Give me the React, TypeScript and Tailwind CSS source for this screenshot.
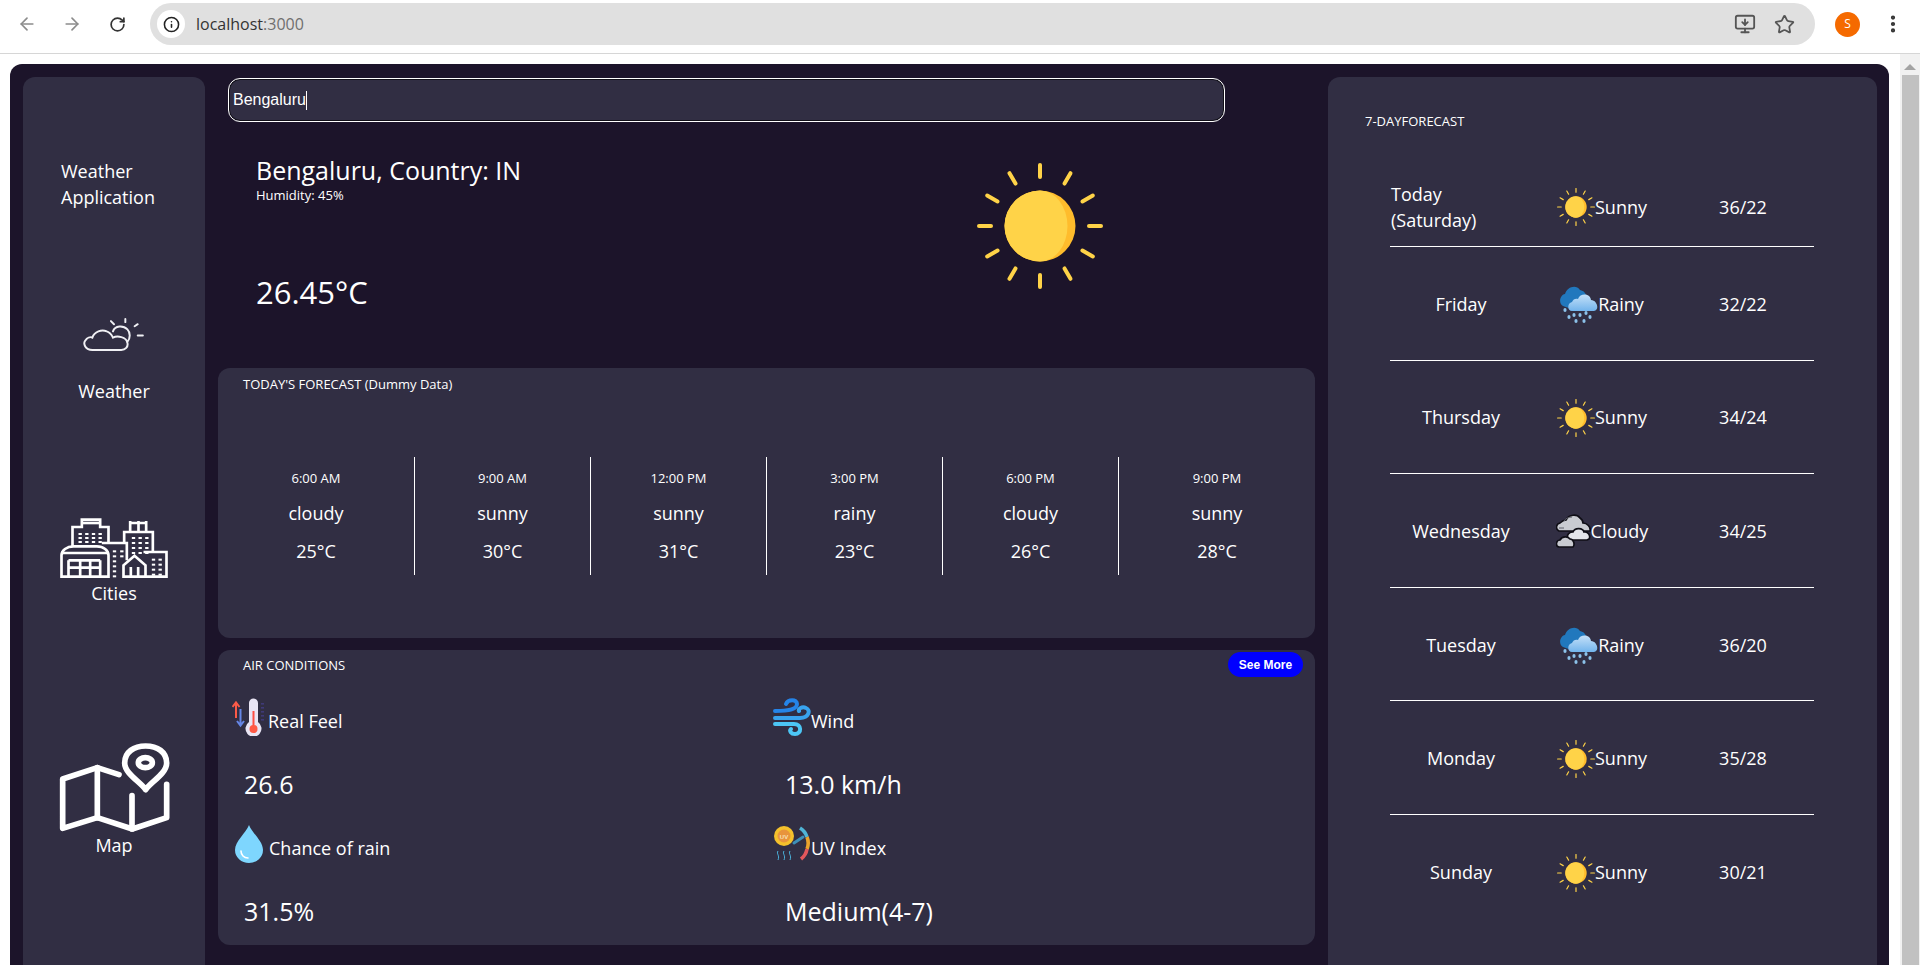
import React from "react";
import { ArrowLeft, ArrowRight, RotateCw, Info, Star, MonitorDown, EllipsisVertical } from "lucide-react";

function SunIcon({ size = 38 }: { size?: number }) {
  const angles = [0, 30, 60, 90, 120, 150, 180, 210, 240, 270, 300, 330];
  return (
    <svg width={size} height={size} viewBox="0 0 126 126" className="shrink-0">
      {angles.map((a) => (
        <line key={a} x1="63" y1="2" x2="63" y2="14" stroke="#ffd348" strokeWidth="4" strokeLinecap="round" transform={`rotate(${a} 63 63)`} />
      ))}
      <circle cx="63" cy="63" r="35.5" fill="#ffbc2c" />
      <path d="M63 27.5 A35.5 35.5 0 0 0 63 98.5 A27.5 35.5 0 0 0 63 27.5 Z" fill="#ffd348" />
    </svg>
  );
}

function RainIcon() {
  return (
    <svg width="38" height="38" viewBox="0 0 38 38" className="shrink-0">
      <defs>
        <linearGradient id="rainFront" x1="0" y1="0" x2="0" y2="1">
          <stop offset="0" stopColor="#c4e0f8" />
          <stop offset="1" stopColor="#72b4ec" />
        </linearGradient>
      </defs>
      <path d="M3 21 C-2 18 0 10 5 9 C7 2 16 -1 20 5 C24 6 26 8 26 12 L14 25 Z" fill="#2178bd" />
      <path d="M12 26 C7 26 7 18 12 17 C13 14 16 13 18 14 C20 8 30 8 31 15 C37 15 40 25 34 26 Z" fill="url(#rainFront)" />
      {[[5, 25], [9, 32], [14, 30], [20, 30], [26, 28], [16, 36], [24, 36], [30, 32]].map(([x, y]) => (
        <ellipse key={`${x}-${y}`} cx={x} cy={y} rx="1.6" ry="2" fill="#8cc2ea" />
      ))}
    </svg>
  );
}

function CloudyIcon() {
  return (
    <svg width="35" height="35" viewBox="0 0 35 35" className="shrink-0">
      <path d="M3 17 C-1 15 0 10 4 9 C6 7 8 6 10 6 C13 0 21 0 24 4 C27 6 27 8 27 9 C31 9 35 13 34 17 Z" fill="#c9cbd1" stroke="#0f0e16" strokeWidth="1.7" />
      <path d="M12 25 C10 20 14 18 17 18 C19 13 27 14 28 18 C32 17 35 22 33 25 L31 26 L16 26 Z" fill="#e4e5ea" stroke="#0f0e16" strokeWidth="1.7" />
      <path d="M3 33 C-1 32 0 26 4 26 C6 22 12 22 14 25 C18 25 19 31 17 33 Z" fill="#c9cbd1" stroke="#0f0e16" strokeWidth="1.7" />
      <path d="M8 7 C10 4 13 3 16 3 M3 14 H8" stroke="#5c5e68" strokeWidth="1" fill="none" />
    </svg>
  );
}

function ThermoIcon() {
  return (
    <svg width="36" height="38" viewBox="0 0 36 38" className="shrink-0">
      <path d="M4 20 V5 M0.5 9 L4 4.5 L7.5 9" stroke="#fb5a48" strokeWidth="2" fill="none" />
      <path d="M8.5 11 V27 M5 23 L8.5 27.5 L12 23" stroke="#6686e6" strokeWidth="2" fill="none" />
      <path d="M17 24 V5 A4.5 4.5 0 0 1 26 5 V24 A8 8 0 1 1 17 24 Z" fill="#e9e5f4" />
      <rect x="20.5" y="13" width="2" height="16" fill="#ff4f44" />
      <circle cx="21.5" cy="31" r="4" fill="#ff5a46" />
      {[5, 9, 13, 17, 21].map((y) => (
        <rect key={y} x="29" y={y} width="3" height="1.6" fill="#3f3a78" />
      ))}
    </svg>
  );
}

function WindIcon() {
  return (
    <svg width="38" height="38" viewBox="0 0 38 38" fill="none" strokeLinecap="round" className="shrink-0">
      <path d="M13 6 C15 1 24 1 24 6 C24 11 17 13 2 13" stroke="#2584e8" strokeWidth="4" />
      <path d="M2 20 H27 C36 20 38 12 33 10 C29 8 25 11 26 13" stroke="#38a3ee" strokeWidth="4" />
      <path d="M2 26 H21 C29 26 29 36 22 36 C18 36 16 33 18 31" stroke="#4cc6f5" strokeWidth="4" />
    </svg>
  );
}

function DropIcon() {
  return (
    <svg width="28" height="38" viewBox="0 0 28 38" className="shrink-0">
      <path d="M14 0 C11 8 0 16 0 25 A14 13 0 0 0 28 25 C28 16 17 8 14 0 Z" fill="#7ed6fe" />
      <path d="M6 26 C6 30 9 33 13 33" stroke="#ffffff" strokeWidth="1.6" fill="none" strokeLinecap="round" />
    </svg>
  );
}

function UvIcon() {
  return (
    <svg width="38" height="38" viewBox="0 0 38 38" fill="none" className="shrink-0">
      <circle cx="11" cy="11" r="10" fill="#f4c12c" />
      <circle cx="11" cy="11" r="6.5" fill="#e8943c" />
      <text x="11" y="13.5" fontSize="6" fontWeight="700" textAnchor="middle" fill="#f8e2b8" fontFamily="Liberation Sans">UV</text>
      <path d="M5 26 C3 29 7 30 5 35 M11 26 C9 29 13 30 11 35 M17 26 C15 29 19 30 17 35" stroke="#4bb2dc" strokeWidth="1" />
      <path d="M27 3 A16 16 0 0 1 34 12" stroke="#4fb4d6" strokeWidth="3.6" />
      <path d="M34 12 A16 16 0 0 1 34 24" stroke="#eba32c" strokeWidth="3.6" />
      <path d="M34 24 A16 16 0 0 1 28 34" stroke="#e2575c" strokeWidth="3.6" />
      <path d="M21 18 L30 12" stroke="#3d8fb8" strokeWidth="3" strokeLinecap="round" />
    </svg>
  );
}

function WeatherOutline() {
  return (
    <svg width="62" height="33" viewBox="0 0 60 32" fill="none" stroke="#f0f0f4" strokeWidth="1.9" strokeLinecap="round" className="shrink-0">
      <path d="M9 31 C2 31 0 25 2 22 C4 19 7 18 9 19 C11 13 18 11 23 13 C26 14 28 17 29 19 C33 17 42 18 43 24 C44 28 41 31 37 31 Z" />
      <path d="M29 13 C31 7 39 7 43 11 C46 14 46 20 43 23" />
      <path d="M27 3 L30 6 M41 1 V4 M53 6 L50 8 M58 17 H53" />
    </svg>
  );
}

function CitiesIcon() {
  const dots: number[][] = [];
  for (const y of [158, 170, 182]) for (const x of [235, 255, 275, 295]) dots.push([x, y]);
  for (const y of [170, 185, 200, 215]) for (const x of [395, 415, 435]) dots.push([x, y]);
  for (const y of [210, 225, 240, 255, 270, 285]) dots.push([338, y]);
  for (const y of [210, 225]) dots.push([360, y]);
  for (const y of [235, 250, 265, 280]) for (const x of [455, 475]) dots.push([x, y]);
  return (
    <svg width="108" height="60" viewBox="180 113 323 180" fill="none" stroke="#ffffff" strokeWidth="8" className="shrink-0">
      <path d="M184 289 V225 C184 210 200 198 220 198 H290 C310 198 325 210 325 225 V289 Z" />
      <path d="M183 218 H325 M205 240 H300 M205 262 H300 M205 240 V290 M240 240 V290 M270 240 V290 M300 240 V290" />
      <path d="M217 198 V140 H245 V118 H300 V140 H325 V190" />
      <path d="M248 128 H297" />
      <path d="M305 188 H380 V240" />
      <path d="M372 188 V155 H458 V215" />
      <path d="M390 155 V122 M415 155 V122 M438 155 V122 M390 128 H438" />
      <path d="M430 215 H499 V289 H370 V255 L403 226 L436 255 V289" />
      <path d="M392 290 V260 M414 290 V260" />
      {dots.map(([x, y]) => (
        <rect key={`${x}-${y}`} x={x} y={y} width="10" height="6" fill="#ffffff" stroke="none" />
      ))}
    </svg>
  );
}

function MapIcon() {
  return (
    <svg width="112" height="90" viewBox="172 785 336 270" fill="none" stroke="#ffffff" strokeWidth="17" strokeLinecap="round" strokeLinejoin="round" className="shrink-0">
      <path d="M355 883 L290 862 L186 896 V1044 L290 1012 L395 1046 L498 1012 V912" />
      <path d="M290 862 V1012 M394 946 V1046" />
      <path d="M435 928 C420 905 372 880 372 848 C372 815 400 797 435 797 C470 797 498 815 498 848 C498 880 450 905 435 928 Z" />
      <ellipse cx="434" cy="847" rx="21" ry="15" strokeWidth="17" />
    </svg>
  );
}

const hours = [
  { time: "6:00 AM", cond: "cloudy", temp: "25°C" },
  { time: "9:00 AM", cond: "sunny", temp: "30°C" },
  { time: "12:00 PM", cond: "sunny", temp: "31°C" },
  { time: "3:00 PM", cond: "rainy", temp: "23°C" },
  { time: "6:00 PM", cond: "cloudy", temp: "26°C" },
  { time: "9:00 PM", cond: "sunny", temp: "28°C" },
];

const days = [
  { day: "Friday", cond: "Rainy", temp: "32/22" },
  { day: "Thursday", cond: "Sunny", temp: "34/24" },
  { day: "Wednesday", cond: "Cloudy", temp: "34/25" },
  { day: "Tuesday", cond: "Rainy", temp: "36/20" },
  { day: "Monday", cond: "Sunny", temp: "35/28" },
  { day: "Sunday", cond: "Sunny", temp: "30/21" },
];

function CondIcon({ cond }: { cond: string }) {
  if (cond === "Rainy") return <RainIcon />;
  if (cond === "Cloudy") return <CloudyIcon />;
  return <SunIcon />;
}

function Toolbar() {
  return (
    <div className="flex h-[54px] items-center border-b border-[#d6d6d6] bg-white pb-[5px] font-['Open_Sans',sans-serif] font-normal">
      <div className="flex w-[150px] items-center pl-[17px]">
        <ArrowLeft size={20} className="text-[#8c8c8c]" />
        <ArrowRight size={20} className="ml-[25px] text-[#8c8c8c]" />
        <RotateCw size={17} strokeWidth={2.4} className="ml-[27px] text-[#333333]" />
      </div>
      <div className="flex h-[42px] w-[1665px] items-center rounded-full bg-[#e0e0e0] pl-[7px] pr-[7px]">
        <div className="flex h-[28px] w-[28px] items-center justify-center rounded-full bg-white">
          <Info size={17} strokeWidth={2.2} className="text-[#222222]" />
        </div>
        <span className="ml-[11px] text-[16px] text-[#333333]">
          localhost<span className="text-[#6f6f6f]">:3000</span>
        </span>
        <MonitorDown size={22} className="ml-auto text-[#555555]" />
        <Star size={21} strokeWidth={2} className="ml-[18px] mr-[13px] text-[#555555]" />
      </div>
      <div className="ml-[20px] flex h-[25px] w-[25px] items-center justify-center rounded-full bg-[#f56a00] text-[12px] text-white">S</div>
      <EllipsisVertical size={22} strokeWidth={2.6} className="ml-[22px] text-[#333333]" />
    </div>
  );
}

function Scrollbar() {
  return (
    <div className="ml-[11px] flex h-full w-[20px] shrink-0 flex-col items-center bg-[#f1f1f1]">
      <div className="mt-[10px] h-0 w-0 border-x-[6px] border-b-[6px] border-x-transparent border-b-[#a3a3a3]" />
      <div className="mt-[5px] h-full w-[17px] bg-[#c1c1c1]" />
    </div>
  );
}

function Sidebar() {
  return (
    <aside className="flex h-[900px] w-[182px] shrink-0 flex-col items-center rounded-t-xl bg-[#312e43] text-[18px] leading-[26px] text-white">
      <div className="mt-[81px] w-full pl-[38px] pr-[30px]">Weather Application</div>
      <div className="mt-[108px]">
        <WeatherOutline />
      </div>
      <div className="mt-[27px]">Weather</div>
      <div className="mt-[114px]">
        <CitiesIcon />
      </div>
      <div className="mt-[2px]">Cities</div>
      <div className="mt-[136px]">
        <MapIcon />
      </div>
      <div className="mt-[0px]">Map</div>
    </aside>
  );
}

function AirItem({ icon, label, value }: { icon: React.ReactNode; label: string; value: string }) {
  return (
    <div>
      <div className="flex h-[38px] items-end">
        {icon}
        <span className="mb-[2px] text-[18px] leading-[26px]">{label}</span>
      </div>
      <div className="mt-[30px] pl-[12px] text-[25px] leading-[36px]">{value}</div>
    </div>
  );
}

function Center() {
  return (
    <main className="w-[1097px] shrink-0">
      <div className="ml-[10px] mt-[1px] flex h-[44px] w-[997px] items-center rounded-[12px] border border-white bg-[#312e43] pl-[4px] font-['Liberation_Sans',sans-serif] text-[16px] font-normal text-white shadow-[inset_0_0_0_1px_#111018]">
        Bengaluru<span className="h-[19px] w-px bg-white" />
      </div>

      <section className="flex h-[246px] text-white">
        <div className="pl-[38px] pt-[33px]">
          <div className="text-[25px] leading-[30px]">Bengaluru, Country: IN</div>
          <div className="mt-[3px] text-[13px] leading-[14px]">Humidity: 45%</div>
          <div className="mt-[70px] text-[31px] leading-[40px]">26.45°C</div>
        </div>
        <div className="ml-auto mr-[212px] mt-[41px]">
          <SunIcon size={126} />
        </div>
      </section>

      <section className="h-[270px] rounded-xl bg-[#312e43] text-white">
        <div className="pl-[25px] pt-[8px] text-[13px] leading-[16px]">TODAY'S FORECAST (Dummy Data)</div>
        <div className="mt-[65px] grid h-[118px] grid-cols-[197px_176px_176px_176px_176px_1fr]">
          {hours.map((h, i) => (
            <div key={h.time} className={`flex flex-col items-center pt-[12px] ${i < 5 ? "border-r border-white" : ""}`}>
              <div className="text-[13px] leading-[18px]">{h.time}</div>
              <div className="mt-[13px] text-[18px] leading-[26px]">{h.cond}</div>
              <div className="mt-[12px] text-[18px] leading-[26px]">{h.temp}</div>
            </div>
          ))}
        </div>
      </section>

      <section className="mt-[12px] h-[295px] rounded-xl bg-[#312e43] text-white">
        <div className="flex h-[27px] items-center justify-between pl-[25px] pr-[12px] pt-[2px]">
          <span className="text-[13px] leading-[16px]">AIR CONDITIONS</span>
          <button className="h-[25px] w-[75px] rounded-full bg-[#0000ff] font-['Liberation_Sans',sans-serif] text-[12px] font-bold text-white">See More</button>
        </div>
        <div className="mt-[21px] grid grid-cols-[541px_1fr] gap-y-[23px] pl-[14px]">
          <AirItem icon={<ThermoIcon />} label="Real Feel" value="26.6" />
          <AirItem icon={<WindIcon />} label="Wind" value="13.0 km/h" />
          <AirItem icon={<div className="ml-[3px] mr-[6px]"><DropIcon /></div>} label="Chance of rain" value="31.5%" />
          <AirItem icon={<UvIcon />} label="UV Index" value="Medium(4-7)" />
        </div>
      </section>
    </main>
  );
}

function Forecast() {
  return (
    <aside className="h-[900px] w-[549px] shrink-0 rounded-t-xl bg-[#312e43] text-white">
      <div className="pl-[37px] pt-[36px] text-[13px] leading-[16px]">7-DAYFORECAST</div>
      <div className="ml-[62px] mt-[39px] w-[424px] text-[18px]">
        <div className="flex h-[79px] items-center border-b border-white">
          <div className="w-[142px] pl-[1px] pr-[40px] leading-[26px]">Today (Saturday)</div>
          <div className="flex w-[140px] items-center justify-center">
            <SunIcon />
            <span>Sunny</span>
          </div>
          <div className="w-[142px] text-center">36/22</div>
        </div>
        {days.map((d, i) => (
          <div key={d.day} className={`flex h-[113.6px] items-center pt-[2px] ${i < 5 ? "border-b border-white" : ""}`}>
            <div className="w-[142px] text-center">{d.day}</div>
            <div className="flex w-[140px] items-center justify-center">
              <CondIcon cond={d.cond} />
              <span>{d.cond}</span>
            </div>
            <div className="w-[142px] text-center">{d.temp}</div>
          </div>
        ))}
      </div>
    </aside>
  );
}

export default function App() {
  return (
    <div className="h-[965px] overflow-hidden bg-white font-['Comic_Sans_MS','Open_Sans',sans-serif] font-medium">
      <Toolbar />
      <div className="flex h-[911px]">
        <div className="ml-[10px] mt-[10px] flex w-[1879px] shrink-0 gap-[13px] overflow-hidden rounded-t-xl bg-[#1c142a] pl-[13px] pt-[13px]">
          <Sidebar />
          <Center />
          <Forecast />
        </div>
        <Scrollbar />
      </div>
    </div>
  );
}
